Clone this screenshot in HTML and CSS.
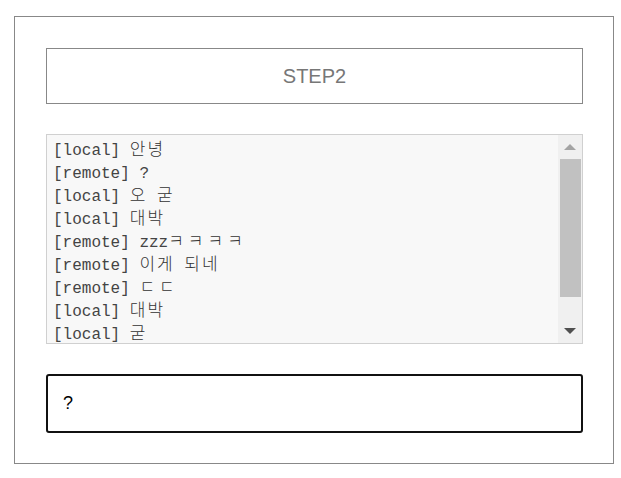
FILE: index.html
```html
<!DOCTYPE html>
<html lang="ko">
<head>
<meta charset="utf-8">
<link rel="stylesheet" href="styles.css">
</head>
<body>
<div class="panel">
  <div class="step">STEP2</div>
  <div class="log">
    <div class="log-lines">
      <div class="line">[local] <span class="ko">안녕</span></div>
      <div class="line">[remote] ?</div>
      <div class="line">[local] <span class="ko">오</span> <span class="ko">굳</span></div>
      <div class="line">[local] <span class="ko">대박</span></div>
      <div class="line">[remote] zzz<span class="ko jamo">ㅋㅋㅋㅋ</span></div>
      <div class="line">[remote] <span class="ko">이게</span> <span class="ko">되네</span></div>
      <div class="line">[remote] <span class="ko jamo">ㄷㄷ</span></div>
      <div class="line">[local] <span class="ko">대박</span></div>
      <div class="line">[local] <span class="ko">굳</span></div>
    </div>
    <div class="scrollbar">
      <div class="arrow up"></div>
      <div class="track"><div class="thumb"></div></div>
      <div class="arrow down"></div>
    </div>
  </div>
  <div class="input">?</div>
</div>
</body>
</html>
```
FILE: styles.css
```css
html, body {
  margin: 0;
  padding: 0;
  background: #fff;
}
body {
  padding: 16px 0 0 14px;
}
.panel {
  box-sizing: border-box;
  width: 600px;
  height: 448px;
  border: 1px solid #888;
  padding: 31px 30px 30px 31px;
  display: flex;
  flex-direction: column;
  gap: 30px;
}
.step {
  box-sizing: border-box;
  height: 56px;
  border: 1px solid #888;
  display: flex;
  align-items: center;
  justify-content: center;
  font-family: "Liberation Sans", Arial, sans-serif;
  font-size: 20px;
  color: #777;
}
.log {
  box-sizing: border-box;
  height: 210px;
  border: 1px solid #d0d0d0;
  background: #f8f8f8;
  display: flex;
  overflow: hidden;
}
.log-lines {
  flex: 1;
  padding: 5px 6px 0;
  font-family: "Liberation Mono", "Noto Sans CJK KR", monospace;
  font-size: 16px;
  line-height: 23px;
  color: #444;
  overflow: hidden;
}
.line {
  white-space: pre;
  height: 23px;
}
.ko {
  font-family: "Noto Sans CJK KR", sans-serif;
  font-weight: 300;
  font-size: 17px;
  line-height: 16px;
  letter-spacing: 2px;
  color: #333;
}
.ko.jamo {
  letter-spacing: 4px;
}
.scrollbar {
  width: 24px;
  background: #f0f0f0;
  display: flex;
  flex-direction: column;
}
.arrow {
  height: 24px;
  display: flex;
  align-items: center;
  justify-content: center;
}
.arrow::before {
  content: "";
  width: 0;
  height: 0;
  border-left: 6px solid transparent;
  border-right: 6px solid transparent;
}
.arrow.up::before {
  border-bottom: 6px solid #a3a3a3;
}
.arrow.down::before {
  border-top: 6px solid #505050;
}
.track {
  flex: 1;
  padding: 0 1px 0 2px;
  display: flex;
  flex-direction: column;
}
.thumb {
  height: 138px;
  background: #c1c1c1;
}
.input {
  box-sizing: border-box;
  height: 59px;
  border: 2px solid #111;
  border-radius: 3px;
  display: flex;
  align-items: center;
  padding-left: 15px;
  font-family: "Liberation Sans", Arial, sans-serif;
  font-size: 18px;
  color: #000;
}
```
